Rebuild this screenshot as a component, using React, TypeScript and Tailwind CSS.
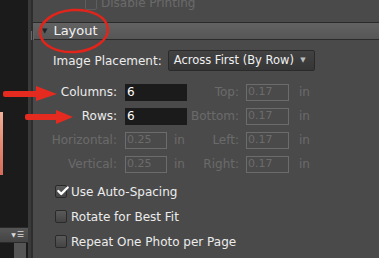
import { Check } from "lucide-react";

const font = { fontFamily: '"DejaVu Sans", "Liberation Sans", sans-serif' };

function Checkbox({ checked, label }: { checked?: boolean; label: string }) {
  return (
    <div className="flex h-[25px] items-center gap-[4px]">
      <div className="relative flex h-[13px] w-[12px] items-center justify-center rounded-[2px] border border-[#2a2a2a] bg-gradient-to-b from-[#5a5a5a] to-[#444]">
        {checked && <Check className="absolute -top-[2px] left-0 h-[14px] w-[14px] text-white" strokeWidth={4} />}
      </div>
      <span className="text-[12px] text-[#ececec]">{label}</span>
    </div>
  );
}

function DimInput({ value, wide }: { value: string; wide?: boolean }) {
  return (
    <div
      className={`flex h-[17px] items-center border border-[#6c6c6c] px-[1px] text-[11px] text-[#6c6c6c] ${
        wide ? "w-[43px]" : "w-[42px]"
      }`}
    >
      {value}
    </div>
  );
}

function FieldRow({
  label,
  left,
  rightLabel,
  rightValue,
  active,
}: {
  label: string;
  left: React.ReactNode;
  rightLabel: string;
  rightValue: string;
  active?: boolean;
}) {
  return (
    <div className="flex h-[24px] items-center text-[12px]">
      <span className={`w-[84px] text-right ${active ? "text-[#ececec]" : "text-[#6a6a6a]"}`}>{label}</span>
      <div className="ml-[8px] flex w-[64px] items-center">{left}</div>
      <span className="w-[50px] text-right text-[#6a6a6a]">{rightLabel}</span>
      <div className="ml-[7px]">
        <DimInput value={rightValue} wide />
      </div>
      <span className="ml-[10px] text-[#6a6a6a]">in</span>
    </div>
  );
}

export default function App() {
  return (
    <div className="relative flex h-[258px] w-[379px] overflow-hidden bg-[#4a4a4a]" style={font}>
      {/* left filmstrip */}
      <div className="flex w-[28px] flex-col bg-[#1b1b1b]">
        <div className="h-[112px]" />
        <div className="h-[63px] w-[3px] bg-gradient-to-b from-[#f0b09a] via-[#e58a72] to-[#d36d5a]" />
        <div className="flex-1" />
        <div className="flex h-[16px] items-center justify-end gap-[1px] border-y border-[#2a2a2a] bg-gradient-to-b from-[#555] to-[#444] pr-[4px] text-[8px] leading-none text-[#d8d8d8]">
          <span className="text-[6px]">▼</span>
          <span>☰</span>
        </div>
        <div className="flex h-[15px] justify-end pr-[2px]">
          <div className="w-[12px] bg-[#555]" />
        </div>
      </div>
      <div className="w-[5px] border-r-2 border-[#2d2d2d] bg-[#3a3a3a]" />

      {/* main panel */}
      <div className="flex flex-1 flex-col">
        <div className="h-[22px] overflow-hidden">
          <div className="-mt-[6px] flex items-center gap-[4px] pl-[52px]">
            <div className="h-[13px] w-[12px] rounded-[2px] border border-[#5e5e5e]" />
            <span className="text-[12px] text-[#6a6a6a]">Disable Printing</span>
          </div>
        </div>
        <div className="flex h-[18px] items-center border-y border-[#2b2b2b] bg-gradient-to-b from-[#626262] to-[#565656] pl-[9px]">
          <span className="text-[7px] text-[#222]">▼</span>
          <span className="ml-[6px] text-[13px] text-[#f2f2f2]">Layout</span>
        </div>

        <div className="mt-[10px] flex h-[21px] items-center pl-[20px]">
          <span className="text-[12px] text-[#ececec]">Image Placement:</span>
          <div className="ml-[6px] flex h-[21px] w-[147px] items-center justify-between rounded-[2px] border border-[#2a2a2a] bg-gradient-to-b from-[#424242] to-[#363636] pl-[5px] pr-[8px]">
            <span className="text-[11.5px] text-[#f0f0f0]">Across First (By Row)</span>
            <span className="text-[7px] text-[#bbb]">▼</span>
          </div>
        </div>

        <div className="mt-[9px] flex flex-col">
          <FieldRow
            active
            label="Columns:"
            left={<div className="flex h-[17px] w-[62px] items-center bg-[#1b1b1b] pl-[2px] text-[12px] text-white">6</div>}
            rightLabel="Top:"
            rightValue="0.17"
          />
          <FieldRow
            active
            label="Rows:"
            left={<div className="flex h-[17px] w-[62px] items-center bg-[#1b1b1b] pl-[2px] text-[12px] text-white">6</div>}
            rightLabel="Bottom:"
            rightValue="0.17"
          />
          <FieldRow
            label="Horizontal:"
            left={
              <>
                <DimInput value="0.25" />
                <span className="ml-[7px] text-[#6a6a6a]">in</span>
              </>
            }
            rightLabel="Left:"
            rightValue="0.17"
          />
          <FieldRow
            label="Vertical:"
            left={
              <>
                <DimInput value="0.25" />
                <span className="ml-[7px] text-[#6a6a6a]">in</span>
              </>
            }
            rightLabel="Right:"
            rightValue="0.17"
          />
        </div>

        <div className="mt-[3px] flex flex-col pl-[22px]">
          <Checkbox checked label="Use Auto-Spacing" />
          <Checkbox label="Rotate for Best Fit" />
          <Checkbox label="Repeat One Photo per Page" />
        </div>
      </div>

      {/* panel grip */}
      <div className="absolute left-[31px] top-[31px] flex h-[9px] gap-[1px]">
        <div className="w-[1px] bg-[#666]" />
        <div className="w-[1px] bg-[#666]" />
      </div>

      {/* red annotations */}
      <svg className="pointer-events-none absolute inset-0" width="379" height="258">
        <ellipse cx="74" cy="31" rx="34" ry="21" fill="none" stroke="#e3241b" strokeWidth="2.5" transform="rotate(-4 74 31)" />
        <g fill="#e52a20">
          <rect x="3" y="91" width="38" height="6" rx="2" />
          <polygon points="36,86 57,94 36,101" />
          <rect x="25" y="114" width="36" height="6" rx="2" />
          <polygon points="56,110 73,117 56,124" />
        </g>
      </svg>
    </div>
  );
}
